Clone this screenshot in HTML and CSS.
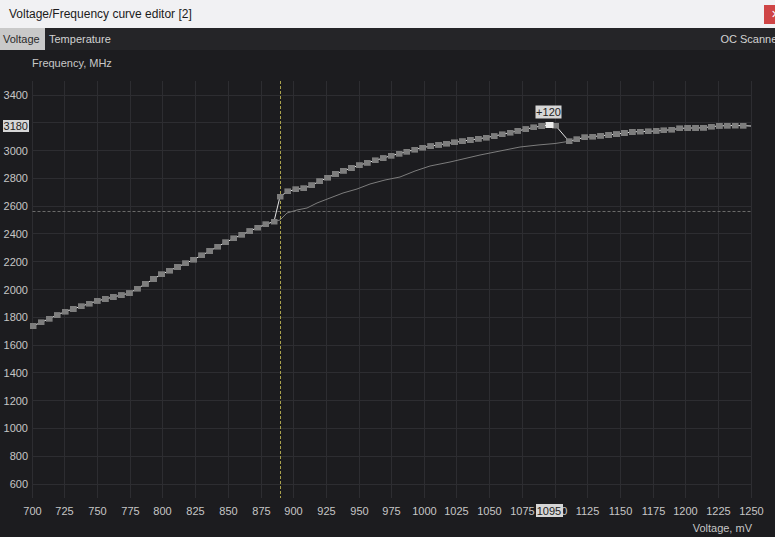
FILE: index.html
```html
<!DOCTYPE html>
<html>
<head>
<meta charset="utf-8">
<title>Voltage/Frequency curve editor</title>
<link rel="stylesheet" href="styles.css">
</head>
<body>
<div class="titlebar">
  <span class="title">Voltage/Frequency curve editor [2]</span>
  <span class="close">&#x2715;</span>
</div>
<div class="tabs">
  <span class="tab active">Voltage</span>
  <span class="tab">Temperature</span>
  <span class="tab right">OC Scanner</span>
</div>
<div class="chart">
  <div class="chart-head">Frequency, MHz</div>
  <svg class="plot" viewBox="0 80 775 457" xmlns="http://www.w3.org/2000/svg">
    <defs>
      <marker id="sq" viewBox="0 0 7 6" refX="3.5" refY="3" markerWidth="7" markerHeight="6" markerUnits="userSpaceOnUse">
        <rect width="7" height="6" class="sq"/>
      </marker>
    </defs>
    <path class="grid" d="M32.5 81V498M64.5 81V498M97.5 81V498M130.5 81V498M162.5 81V498M195.5 81V498M228.5 81V498M261.5 81V498M293.5 81V498M326.5 81V498M359.5 81V498M391.5 81V498M424.5 81V498M456.5 81V498M489.5 81V498M522.5 81V498M555.5 81V498M587.5 81V498M620.5 81V498M653.5 81V498M685.5 81V498M718.5 81V498M751.5 81V498
    M32.5 95.5H751.5M32.5 122.5H751.5M32.5 150.5H751.5M32.5 178.5H751.5M32.5 206.5H751.5M32.5 233.5H751.5M32.5 261.5H751.5M32.5 289.5H751.5M32.5 317.5H751.5M32.5 345.5H751.5M32.5 372.5H751.5M32.5 400.5H751.5M32.5 428.5H751.5M32.5 456.5H751.5M32.5 484.5H751.5"/>
    <path class="cross-v" d="M280.5 81V498"/>
    <path class="cross-h" d="M32.5 211.5H751.5"/>
    <polyline class="base" points="274,221.5 280,220 287,213 297,210 307,208 317,203 330,198 343,193 357,189 370,184 385,180 400,177 415,171 430,166 450,162 480,155 500,151 520,147 538,145 555,143.5 569,141.3"/>
    <polyline class="curve" points="33,326 41,322.4 49.1,318.7 57.1,315.1 65.1,311.6 73.2,309 81.2,306.3 89.2,303.6 97.2,300.9 105.3,299 113.3,297 121.3,295.1 129.4,293.1 137.4,288.6 145.4,283.9 153.5,279 161.5,274.3 169.5,270.6 177.5,267 185.6,263.3 193.6,259.6 201.6,255.4 209.7,251 217.7,246.6 225.7,242.3 233.8,238.4 241.8,234.7 249.8,231.1 257.8,227.5 265.9,224.3 274,221.5 280,196.5 287.9,191.4 295.9,189.3 303.8,188.3 311.7,185.2 319.7,181.2 327.6,177.6 335.5,174 343.4,170.8 351.4,168 359.3,165.2 367.2,162.8 375.2,160.4 383.1,158.1 391,155.7 399,153.7 406.9,151.7 414.8,149.6 422.7,147.6 430.7,146.1 438.6,144.9 446.5,143.6 454.5,142.4 462.4,141.2 470.3,140 478.3,138.8 486.2,137.6 494.1,136.1 502.1,134.4 510,132.6 517.9,130.9 525.9,129.1 533.8,127.4 541.7,126 549.5,125 555.5,125.5 569,141.3 576.9,139.3 584.8,137.3 592.7,136.6 600.6,135.8 608.6,135 616.5,134.1 624.4,133 632.3,132 640.2,131.5 648.1,131.4 656,130.9 663.9,130.4 671.8,129.6 679.7,128.4 687.7,128 695.6,128 703.5,127.8 711.4,126.6 719.3,125.9 727.2,125.7 735.1,125.5 743,125.7 751,126"/>
    <rect class="sel" x="545.5" y="122" width="8" height="6"/>
    <g class="ylab">
      <text x="28" y="99">3400</text>
      <text x="28" y="154.6">3000</text>
      <text x="28" y="182.4">2800</text>
      <text x="28" y="210.1">2600</text>
      <text x="28" y="237.9">2400</text>
      <text x="28" y="265.7">2200</text>
      <text x="28" y="293.5">2000</text>
      <text x="28" y="321.3">1800</text>
      <text x="28" y="349.1">1600</text>
      <text x="28" y="376.9">1400</text>
      <text x="28" y="404.6">1200</text>
      <text x="28" y="432.4">1000</text>
      <text x="28" y="460.2">800</text>
      <text x="28" y="488">600</text>
    </g>
    <g class="xlab">
      <text x="32.5" y="514.5">700</text>
      <text x="64.5" y="514.5">725</text>
      <text x="97.5" y="514.5">750</text>
      <text x="130.5" y="514.5">775</text>
      <text x="162.5" y="514.5">800</text>
      <text x="195.5" y="514.5">825</text>
      <text x="228.5" y="514.5">850</text>
      <text x="261.5" y="514.5">875</text>
      <text x="293.5" y="514.5">900</text>
      <text x="326.5" y="514.5">925</text>
      <text x="359.5" y="514.5">950</text>
      <text x="391.5" y="514.5">975</text>
      <text x="424.5" y="514.5">1000</text>
      <text x="456.5" y="514.5">1025</text>
      <text x="489.5" y="514.5">1050</text>
      <text x="522.5" y="514.5">1075</text>
      <text x="555.5" y="514.5">1100</text>
      <text x="587.5" y="514.5">1125</text>
      <text x="620.5" y="514.5">1150</text>
      <text x="653.5" y="514.5">1175</text>
      <text x="685.5" y="514.5">1200</text>
      <text x="718.5" y="514.5">1225</text>
      <text x="751.5" y="514.5">1250</text>
    </g>
    <rect class="hl" x="3" y="120" width="26" height="12"/>
    <text class="hl-text end" x="28" y="130">3180</text>
    <rect class="hl" x="536" y="504" width="27" height="13"/>
    <text class="hl-text mid" x="549" y="514.5">1095</text>
    <rect class="hl tag" x="535.5" y="105.5" width="26" height="13"/>
    <text class="hl-text mid" x="548.5" y="116">+120</text>
    <text class="axis-title" x="752" y="532">Voltage, mV</text>
  </svg>
</div>
</body>
</html>
```
FILE: styles.css
```css
* { box-sizing: border-box; }
html, body { margin: 0; padding: 0; }
body {
  width: 775px;
  height: 537px;
  overflow: hidden;
  background: #1c1c1f;
  font-family: "Liberation Sans", Arial, sans-serif;
}
.titlebar {
  height: 28px;
  background: #f1f1f3;
  display: flex;
  align-items: flex-start;
  justify-content: space-between;
  padding-left: 9px;
  color: #1b1b1b;
  font-size: 12px;
  overflow: hidden;
}
.title { line-height: 28px; }
.close {
  flex-shrink: 0;
  width: 22px;
  height: 19px;
  margin-top: 5px;
  margin-right: -11px;
  background: #cf4545;
  color: #fff;
  font-size: 11px;
  display: flex;
  align-items: center;
  justify-content: center;
}
.tabs {
  height: 22px;
  background: #252528;
  display: flex;
  font-size: 11px;
  overflow: hidden;
}
.tab {
  flex-shrink: 0;
  padding: 0 4px;
  line-height: 22px;
  color: #d2d2d2;
  white-space: nowrap;
}
.tab.active {
  width: 45px;
  padding: 0 4px 0 3px;
  background: #c9c9c9;
  color: #2a2a2a;
}
.tab.right {
  margin-left: auto;
  margin-right: -10px;
}
.chart-head {
  height: 30px;
  padding-left: 32px;
  line-height: 26px;
  font-size: 11px;
  color: #c8c8c8;
}
.plot {
  display: block;
  width: 775px;
  height: 457px;
  font-family: "Liberation Sans", Arial, sans-serif;
}
.grid { stroke: #2d2d31; stroke-width: 1; fill: none; }
.cross-v { stroke: #aaa24c; stroke-width: 1; stroke-dasharray: 3 2; fill: none; }
.cross-h { stroke: #6a6a6a; stroke-width: 1; stroke-dasharray: 3 2; fill: none; }
.base { stroke: #7c7c7c; stroke-width: 1; fill: none; }
.curve {
  stroke: #e6e6e6;
  stroke-width: 1;
  fill: none;
  marker-start: url(#sq);
  marker-mid: url(#sq);
}
.sq { fill: #7d7d7d; }
.sel { fill: #ececec; }
.ylab text { font-size: 11px; fill: #c6c6c6; text-anchor: end; }
.xlab text { font-size: 11px; fill: #c6c6c6; text-anchor: middle; }
.hl { fill: #d6d6d6; }
.hl-text { font-size: 11px; fill: #222; }
.hl-text.end { text-anchor: end; }
.hl-text.mid { text-anchor: middle; }
.axis-title { font-size: 11px; fill: #c6c6c6; text-anchor: end; }
```
